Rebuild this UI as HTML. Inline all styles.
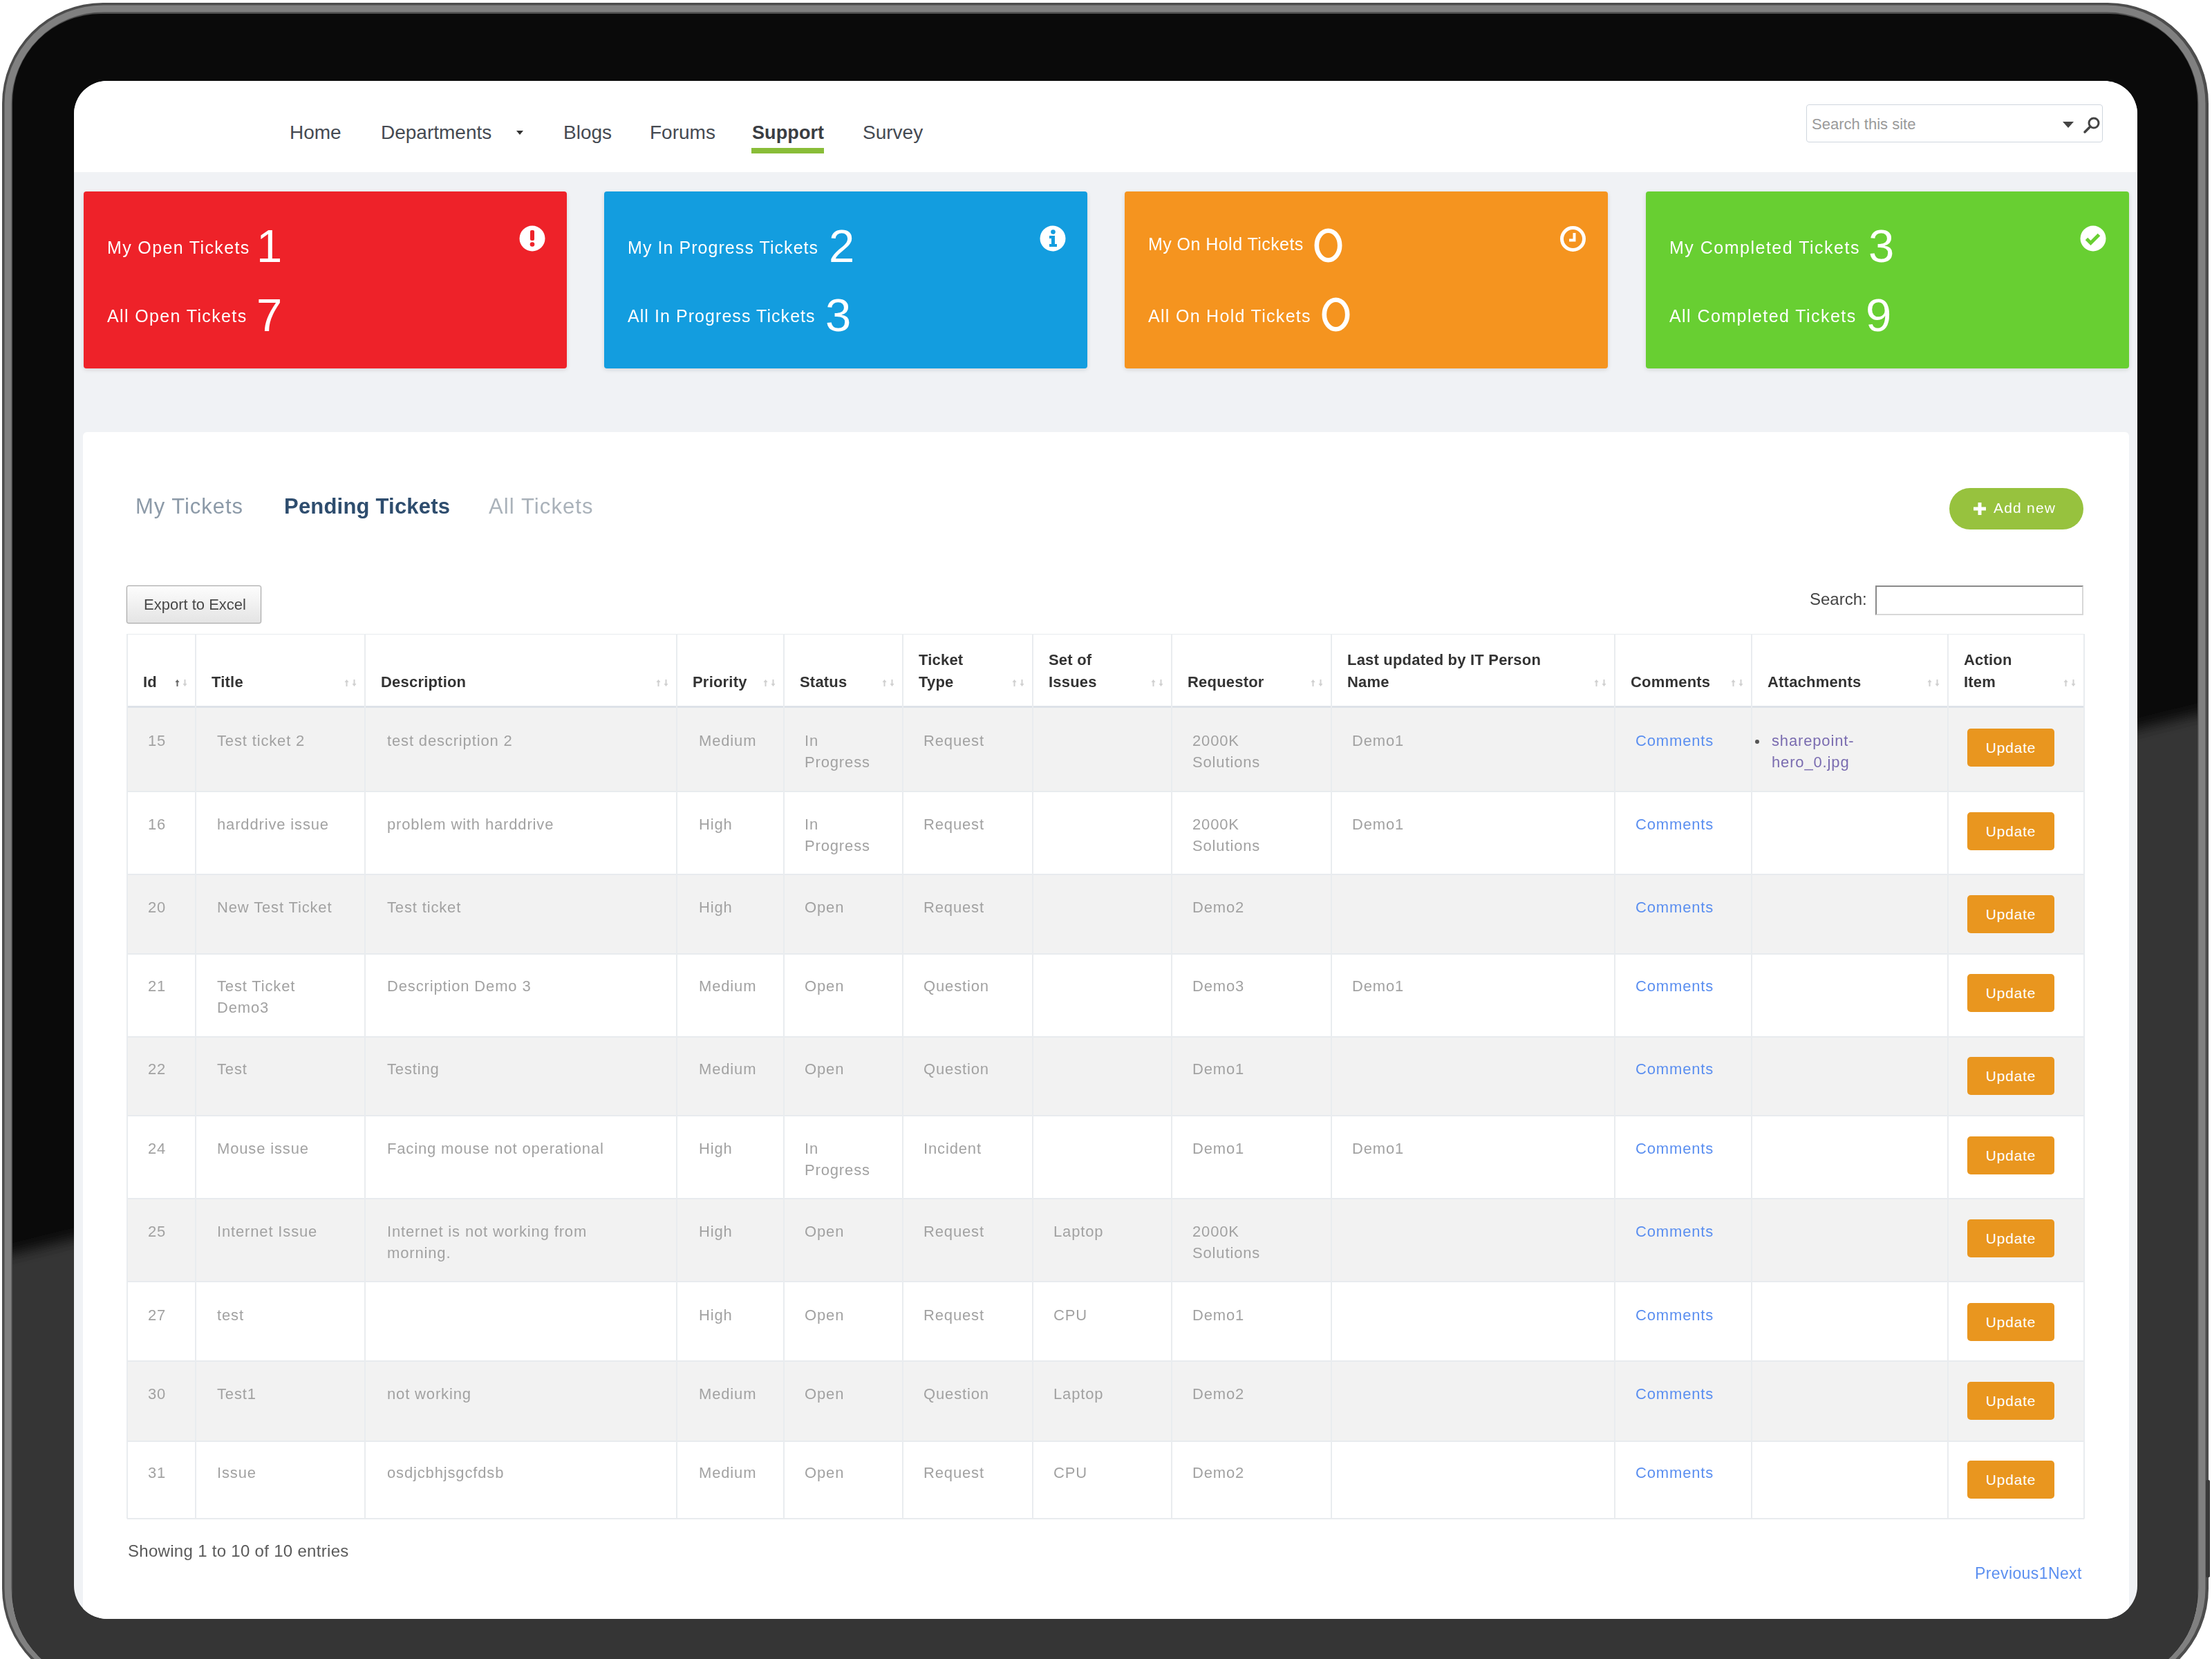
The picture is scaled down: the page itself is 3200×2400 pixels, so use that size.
<!DOCTYPE html>
<html><head><meta charset="utf-8">
<style>
html,body{margin:0;padding:0}
body{width:3200px;height:2400px;overflow:hidden;background:#fff;position:relative;font-family:"Liberation Sans",sans-serif}
.abs{position:absolute}
#frame{position:absolute;left:0;top:0}
#screen{position:absolute;left:0;top:0;width:3200px;height:2400px;clip-path:inset(117px 108px 58px 107px round 48px);background:#f0f2f5}
.nav{position:absolute;top:175px;font-size:28px;color:#454a52;line-height:34px;white-space:nowrap}
.card{position:absolute;top:277px;width:699px;height:256px;border-radius:4px;box-shadow:0 2px 6px rgba(0,0,0,0.12)}
.card .l{position:absolute;left:34px;font-size:25px;color:#fff;letter-spacing:1.5px;white-space:nowrap;line-height:30px}
.card .n{position:absolute;font-size:67px;color:#fff;line-height:70px;font-weight:400}
.card svg{position:absolute;left:629px;top:48px}

.hl{height:1px;background:#e8ebee}
.vl{width:2px;background:#e9ecef}
.th{position:absolute;font-size:22px;font-weight:700;color:#333;line-height:32px;white-space:nowrap;letter-spacing:0.2px}
.td{position:absolute;font-size:22px;color:#a2a2a2;line-height:31px;white-space:nowrap;letter-spacing:0.85px}
.lnk{color:#5b8ff0}
.att{color:#7a6cb0}
.upd{position:absolute;width:126px;height:55px;background:#e9961f;border-radius:5px;color:#fff;font-size:21px;line-height:55px;text-align:center;letter-spacing:0.8px}
.tab{position:absolute;top:713px;font-size:31px;line-height:40px;white-space:nowrap;letter-spacing:0.5px}
</style></head>
<body>
<div id="wrap" style="position:absolute;left:0;top:0;width:3200px;height:2400px;filter:blur(0.6px)">
<svg id="frame" width="3200" height="2400" viewBox="0 0 3200 2400">
  <defs>
    <clipPath id="inner"><rect x="18" y="20" width="3161" height="2413" rx="128" ry="128"/></clipPath>
    <filter id="blur"><feGaussianBlur stdDeviation="10"/></filter>
  </defs>
  <rect x="3" y="4" width="3192" height="2440" rx="146" ry="146" fill="#4d4d4d"/>
  <rect x="11.5" y="12.5" width="3174" height="2423" rx="138" ry="138" fill="none" stroke="#808080" stroke-width="10"/>
  <rect x="18" y="20" width="3161" height="2413" rx="128" ry="128" fill="#0a0a0a"/>
  <g clip-path="url(#inner)">
    <polygon points="-100,1843 3300,1003 3300,2500 -100,2500" fill="#353535" filter="url(#blur)"/>
  </g>
  <rect x="3191" y="2141" width="6" height="141" rx="2" fill="#3a3a3a"/>
</svg>

<div id="screen">
  <!-- header -->
  <div class="abs" style="left:0;top:0;width:3200px;height:249px;background:#fff"></div>
  <div class="nav" style="left:419px">Home</div>
  <div class="nav" style="left:551px">Departments</div>
  <div class="abs" style="left:747px;top:189px;width:0;height:0;border-left:5px solid transparent;border-right:5px solid transparent;border-top:6px solid #333"></div>
  <div class="nav" style="left:815px">Blogs</div>
  <div class="nav" style="left:940px">Forums</div>
  <div class="nav" style="left:1088px;font-weight:700;color:#3a3d42;font-size:27px;letter-spacing:0.1px">Support</div>
  <div class="abs" style="left:1087px;top:214px;width:105px;height:8px;background:#89bd38"></div>
  <div class="nav" style="left:1248px">Survey</div>

  <div class="abs" style="left:2613px;top:151px;width:427px;height:53px;border:1px solid #cfd6de;border-radius:4px;background:#fff"></div>
  <div class="abs" style="left:2621px;top:166px;font-size:22px;color:#9a9a9a;line-height:28px;white-space:nowrap">Search this site</div>
  <div class="abs" style="left:2984px;top:176px;width:0;height:0;border-left:8px solid transparent;border-right:8px solid transparent;border-top:9px solid #444"></div>
  <svg class="abs" style="left:3012px;top:167px" width="28" height="28" viewBox="0 0 28 28"><circle cx="17" cy="11" r="7" fill="none" stroke="#444" stroke-width="3"/><line x1="12" y1="16" x2="4" y2="24" stroke="#444" stroke-width="3.5" stroke-linecap="round"/></svg>

  <!-- cards -->
  <div class="card" style="left:121px;background:#ee2229">
    <div class="l" style="top:66px;letter-spacing:1.36px">My Open Tickets</div>
    <div class="n" style="left:250px;top:44px">1</div>
    <div class="l" style="top:165px;letter-spacing:1.37px">All Open Tickets</div>
    <div class="n" style="left:250px;top:144px">7</div>
    <svg width="40" height="40" viewBox="0 0 40 40"><circle cx="20" cy="20" r="18.5" fill="#fff"/><rect x="17" y="8" width="6" height="15" rx="2" fill="#ee2229"/><circle cx="20" cy="28.5" r="3.3" fill="#ee2229"/></svg>
  </div>
  <div class="card" style="left:874px;background:#139ddf">
    <div class="l" style="top:66px;letter-spacing:1.06px">My In Progress Tickets</div>
    <div class="n" style="left:325px;top:44px">2</div>
    <div class="l" style="top:165px;letter-spacing:1.06px">All In Progress Tickets</div>
    <div class="n" style="left:320px;top:144px">3</div>
    <svg width="40" height="40" viewBox="0 0 40 40"><circle cx="20" cy="20" r="18.5" fill="#fff"/><circle cx="20.5" cy="10.5" r="3.3" fill="#139ddf"/><path d="M15 16h8v12h3v4h-11v-4h3v-8h-3z" fill="#139ddf"/></svg>
  </div>
  <div class="card" style="left:1627px;background:#f5941f">
    <div class="l" style="top:61px;letter-spacing:0.45px">My On Hold Tickets</div>
    <div class="l" style="top:165px;letter-spacing:1.3px">All On Hold Tickets</div>
    <svg style="left:0;top:0" width="699" height="256"><ellipse cx="294.5" cy="78" rx="16.7" ry="21.3" fill="none" stroke="#fff" stroke-width="6.6"/><ellipse cx="305.5" cy="178" rx="16.7" ry="21.3" fill="none" stroke="#fff" stroke-width="6.6"/></svg>
    <svg width="40" height="40" viewBox="0 0 40 40"><circle cx="19.5" cy="20.5" r="16" fill="none" stroke="#fff" stroke-width="5"/><path d="M21.5 12V22.5H14" fill="none" stroke="#fff" stroke-width="4"/></svg>
  </div>
  <div class="card" style="left:2381px;background:#68cf32">
    <div class="l" style="top:66px;letter-spacing:1.5px">My Completed Tickets</div>
    <div class="n" style="left:322px;top:44px">3</div>
    <div class="l" style="top:165px;letter-spacing:1.44px">All Completed Tickets</div>
    <div class="n" style="left:318px;top:144px">9</div>
    <svg style="left:627px" width="40" height="40" viewBox="0 0 40 40"><circle cx="20" cy="20" r="18.5" fill="#fff"/><path d="M10.5 20.5l6 6 12-12" fill="none" stroke="#68cf32" stroke-width="5"/></svg>
  </div>

  <!-- main panel -->
  <div class="abs" style="left:120px;top:625px;width:2960px;height:1800px;background:#fff;border-radius:6px"></div>

  <div class="tab" style="left:196px;color:#8c9aa8;letter-spacing:0.95px">My Tickets</div>
  <div class="tab" style="left:411px;color:#2e4d6e;font-weight:700;letter-spacing:0.2px">Pending Tickets</div>
  <div class="tab" style="left:707px;color:#aab2ba;letter-spacing:1.1px">All Tickets</div>
  <div class="abs" style="left:2820px;top:706px;width:194px;height:60px;border-radius:30px;background:#97c23e"></div>
  <svg class="abs" style="left:2854px;top:726px" width="20" height="20" viewBox="0 0 20 20"><path d="M7.5 1h5v6.5H19v5h-6.5V19h-5v-6.5H1v-5h6.5z" fill="#fff"/></svg>
  <div class="abs" style="left:2884px;top:721px;font-size:21px;line-height:28px;color:#fff;white-space:nowrap;letter-spacing:1.2px">Add new</div>

  <div class="abs" style="left:183px;top:847px;width:193px;height:53px;border:1px solid #a5a5a5;box-shadow:0 0 1px #999;border-radius:3px;background:linear-gradient(#fdfdfd,#e4e4e4)"></div>
  <div class="abs" style="left:208px;top:861px;font-size:22px;line-height:28px;color:#484848;white-space:nowrap">Export to Excel</div>
  <div class="abs" style="left:2618px;top:852px;font-size:24px;line-height:30px;color:#444;white-space:nowrap">Search:</div>
  <div class="abs" style="left:2713px;top:847px;width:297px;height:39px;border:2px solid;border-color:#8a8a8a #d8d8d8 #d8d8d8 #8a8a8a;background:#fff"></div>
<div class="abs" style="left:184px;top:917px;width:2831px;height:106px;background:#fff"></div>
<div class="abs" style="left:184px;top:1023px;width:2831px;height:122px;background:#f2f2f2"></div>
<div class="abs" style="left:184px;top:1145px;width:2831px;height:120px;background:#fff"></div>
<div class="abs" style="left:184px;top:1265px;width:2831px;height:115px;background:#f2f2f2"></div>
<div class="abs" style="left:184px;top:1380px;width:2831px;height:120px;background:#fff"></div>
<div class="abs" style="left:184px;top:1500px;width:2831px;height:114px;background:#f2f2f2"></div>
<div class="abs" style="left:184px;top:1614px;width:2831px;height:120px;background:#fff"></div>
<div class="abs" style="left:184px;top:1734px;width:2831px;height:120px;background:#f2f2f2"></div>
<div class="abs" style="left:184px;top:1854px;width:2831px;height:115px;background:#fff"></div>
<div class="abs" style="left:184px;top:1969px;width:2831px;height:116px;background:#f2f2f2"></div>
<div class="abs" style="left:184px;top:2085px;width:2831px;height:112px;background:#fff"></div>
<div class="abs hl" style="left:184px;top:917px;width:2831px"></div>
<div class="abs" style="left:184px;top:1021px;width:2831px;height:3px;background:#dde2e8"></div>
<div class="abs hl" style="left:184px;top:1144px;width:2831px;height:2px"></div>
<div class="abs hl" style="left:184px;top:1264px;width:2831px;height:2px"></div>
<div class="abs hl" style="left:184px;top:1379px;width:2831px;height:2px"></div>
<div class="abs hl" style="left:184px;top:1499px;width:2831px;height:2px"></div>
<div class="abs hl" style="left:184px;top:1613px;width:2831px;height:2px"></div>
<div class="abs hl" style="left:184px;top:1733px;width:2831px;height:2px"></div>
<div class="abs hl" style="left:184px;top:1853px;width:2831px;height:2px"></div>
<div class="abs hl" style="left:184px;top:1968px;width:2831px;height:2px"></div>
<div class="abs hl" style="left:184px;top:2084px;width:2831px;height:2px"></div>
<div class="abs hl" style="left:184px;top:2196px;width:2831px;height:2px"></div>
<div class="abs vl" style="left:183px;top:917px;height:1280px"></div>
<div class="abs vl" style="left:282px;top:917px;height:1280px"></div>
<div class="abs vl" style="left:527px;top:917px;height:1280px"></div>
<div class="abs vl" style="left:978px;top:917px;height:1280px"></div>
<div class="abs vl" style="left:1133px;top:917px;height:1280px"></div>
<div class="abs vl" style="left:1305px;top:917px;height:1280px"></div>
<div class="abs vl" style="left:1493px;top:917px;height:1280px"></div>
<div class="abs vl" style="left:1694px;top:917px;height:1280px"></div>
<div class="abs vl" style="left:1925px;top:917px;height:1280px"></div>
<div class="abs vl" style="left:2335px;top:917px;height:1280px"></div>
<div class="abs vl" style="left:2533px;top:917px;height:1280px"></div>
<div class="abs vl" style="left:2817px;top:917px;height:1280px"></div>
<div class="abs vl" style="left:3014px;top:917px;height:1280px"></div>
<div class="th" style="left:207px;top:971px">Id</div>
<svg class="abs" style="left:253px;top:982px" width="20" height="12" viewBox="0 0 20 12"><path d="M3.5 1L0.5 5h2v6h2V5h2z" fill="#666"/><path d="M14.5 11L11.5 7h2V1h2v6h2z" fill="#d0d0d0"/></svg>
<div class="th" style="left:306px;top:971px">Title</div>
<svg class="abs" style="left:498px;top:982px" width="20" height="12" viewBox="0 0 20 12"><path d="M3.5 1L0.5 5h2v6h2V5h2z" fill="#d0d0d0"/><path d="M14.5 11L11.5 7h2V1h2v6h2z" fill="#d0d0d0"/></svg>
<div class="th" style="left:551px;top:971px">Description</div>
<svg class="abs" style="left:949px;top:982px" width="20" height="12" viewBox="0 0 20 12"><path d="M3.5 1L0.5 5h2v6h2V5h2z" fill="#d0d0d0"/><path d="M14.5 11L11.5 7h2V1h2v6h2z" fill="#d0d0d0"/></svg>
<div class="th" style="left:1002px;top:971px">Priority</div>
<svg class="abs" style="left:1104px;top:982px" width="20" height="12" viewBox="0 0 20 12"><path d="M3.5 1L0.5 5h2v6h2V5h2z" fill="#d0d0d0"/><path d="M14.5 11L11.5 7h2V1h2v6h2z" fill="#d0d0d0"/></svg>
<div class="th" style="left:1157px;top:971px">Status</div>
<svg class="abs" style="left:1276px;top:982px" width="20" height="12" viewBox="0 0 20 12"><path d="M3.5 1L0.5 5h2v6h2V5h2z" fill="#d0d0d0"/><path d="M14.5 11L11.5 7h2V1h2v6h2z" fill="#d0d0d0"/></svg>
<div class="th" style="left:1329px;top:939px">Ticket<br>Type</div>
<svg class="abs" style="left:1464px;top:982px" width="20" height="12" viewBox="0 0 20 12"><path d="M3.5 1L0.5 5h2v6h2V5h2z" fill="#d0d0d0"/><path d="M14.5 11L11.5 7h2V1h2v6h2z" fill="#d0d0d0"/></svg>
<div class="th" style="left:1517px;top:939px">Set of<br>Issues</div>
<svg class="abs" style="left:1665px;top:982px" width="20" height="12" viewBox="0 0 20 12"><path d="M3.5 1L0.5 5h2v6h2V5h2z" fill="#d0d0d0"/><path d="M14.5 11L11.5 7h2V1h2v6h2z" fill="#d0d0d0"/></svg>
<div class="th" style="left:1718px;top:971px">Requestor</div>
<svg class="abs" style="left:1896px;top:982px" width="20" height="12" viewBox="0 0 20 12"><path d="M3.5 1L0.5 5h2v6h2V5h2z" fill="#d0d0d0"/><path d="M14.5 11L11.5 7h2V1h2v6h2z" fill="#d0d0d0"/></svg>
<div class="th" style="left:1949px;top:939px">Last updated by IT Person<br>Name</div>
<svg class="abs" style="left:2306px;top:982px" width="20" height="12" viewBox="0 0 20 12"><path d="M3.5 1L0.5 5h2v6h2V5h2z" fill="#d0d0d0"/><path d="M14.5 11L11.5 7h2V1h2v6h2z" fill="#d0d0d0"/></svg>
<div class="th" style="left:2359px;top:971px">Comments</div>
<svg class="abs" style="left:2504px;top:982px" width="20" height="12" viewBox="0 0 20 12"><path d="M3.5 1L0.5 5h2v6h2V5h2z" fill="#d0d0d0"/><path d="M14.5 11L11.5 7h2V1h2v6h2z" fill="#d0d0d0"/></svg>
<div class="th" style="left:2557px;top:971px">Attachments</div>
<svg class="abs" style="left:2788px;top:982px" width="20" height="12" viewBox="0 0 20 12"><path d="M3.5 1L0.5 5h2v6h2V5h2z" fill="#d0d0d0"/><path d="M14.5 11L11.5 7h2V1h2v6h2z" fill="#d0d0d0"/></svg>
<div class="th" style="left:2841px;top:939px">Action<br>Item</div>
<svg class="abs" style="left:2985px;top:982px" width="20" height="12" viewBox="0 0 20 12"><path d="M3.5 1L0.5 5h2v6h2V5h2z" fill="#d0d0d0"/><path d="M14.5 11L11.5 7h2V1h2v6h2z" fill="#d0d0d0"/></svg>
<div class="td" style="left:214px;top:1056px">15</div>
<div class="td" style="left:314px;top:1056px">Test ticket 2</div>
<div class="td" style="left:560px;top:1056px">test description 2</div>
<div class="td" style="left:1011px;top:1056px">Medium</div>
<div class="td" style="left:1164px;top:1056px">In<br>Progress</div>
<div class="td" style="left:1336px;top:1056px">Request</div>
<div class="td" style="left:1725px;top:1056px">2000K<br>Solutions</div>
<div class="td" style="left:1956px;top:1056px">Demo1</div>
<div class="td lnk" style="left:2366px;top:1056px">Comments</div>
<div class="abs" style="left:2539px;top:1070px;width:6px;height:6px;border-radius:3px;background:#555"></div>
<div class="td att" style="left:2563px;top:1056px">sharepoint-<br>hero_0.jpg</div>
<div class="upd" style="left:2846px;top:1054px">Update</div>
<div class="td" style="left:214px;top:1177px">16</div>
<div class="td" style="left:314px;top:1177px">harddrive issue</div>
<div class="td" style="left:560px;top:1177px">problem with harddrive</div>
<div class="td" style="left:1011px;top:1177px">High</div>
<div class="td" style="left:1164px;top:1177px">In<br>Progress</div>
<div class="td" style="left:1336px;top:1177px">Request</div>
<div class="td" style="left:1725px;top:1177px">2000K<br>Solutions</div>
<div class="td" style="left:1956px;top:1177px">Demo1</div>
<div class="td lnk" style="left:2366px;top:1177px">Comments</div>
<div class="upd" style="left:2846px;top:1175px">Update</div>
<div class="td" style="left:214px;top:1297px">20</div>
<div class="td" style="left:314px;top:1297px">New Test Ticket</div>
<div class="td" style="left:560px;top:1297px">Test ticket</div>
<div class="td" style="left:1011px;top:1297px">High</div>
<div class="td" style="left:1164px;top:1297px">Open</div>
<div class="td" style="left:1336px;top:1297px">Request</div>
<div class="td" style="left:1725px;top:1297px">Demo2</div>
<div class="td lnk" style="left:2366px;top:1297px">Comments</div>
<div class="upd" style="left:2846px;top:1295px">Update</div>
<div class="td" style="left:214px;top:1411px">21</div>
<div class="td" style="left:314px;top:1411px">Test Ticket<br>Demo3</div>
<div class="td" style="left:560px;top:1411px">Description Demo 3</div>
<div class="td" style="left:1011px;top:1411px">Medium</div>
<div class="td" style="left:1164px;top:1411px">Open</div>
<div class="td" style="left:1336px;top:1411px">Question</div>
<div class="td" style="left:1725px;top:1411px">Demo3</div>
<div class="td" style="left:1956px;top:1411px">Demo1</div>
<div class="td lnk" style="left:2366px;top:1411px">Comments</div>
<div class="upd" style="left:2846px;top:1409px">Update</div>
<div class="td" style="left:214px;top:1531px">22</div>
<div class="td" style="left:314px;top:1531px">Test</div>
<div class="td" style="left:560px;top:1531px">Testing</div>
<div class="td" style="left:1011px;top:1531px">Medium</div>
<div class="td" style="left:1164px;top:1531px">Open</div>
<div class="td" style="left:1336px;top:1531px">Question</div>
<div class="td" style="left:1725px;top:1531px">Demo1</div>
<div class="td lnk" style="left:2366px;top:1531px">Comments</div>
<div class="upd" style="left:2846px;top:1529px">Update</div>
<div class="td" style="left:214px;top:1646px">24</div>
<div class="td" style="left:314px;top:1646px">Mouse issue</div>
<div class="td" style="left:560px;top:1646px">Facing mouse not operational</div>
<div class="td" style="left:1011px;top:1646px">High</div>
<div class="td" style="left:1164px;top:1646px">In<br>Progress</div>
<div class="td" style="left:1336px;top:1646px">Incident</div>
<div class="td" style="left:1725px;top:1646px">Demo1</div>
<div class="td" style="left:1956px;top:1646px">Demo1</div>
<div class="td lnk" style="left:2366px;top:1646px">Comments</div>
<div class="upd" style="left:2846px;top:1644px">Update</div>
<div class="td" style="left:214px;top:1766px">25</div>
<div class="td" style="left:314px;top:1766px">Internet Issue</div>
<div class="td" style="left:560px;top:1766px">Internet is not working from<br>morning.</div>
<div class="td" style="left:1011px;top:1766px">High</div>
<div class="td" style="left:1164px;top:1766px">Open</div>
<div class="td" style="left:1336px;top:1766px">Request</div>
<div class="td" style="left:1524px;top:1766px">Laptop</div>
<div class="td" style="left:1725px;top:1766px">2000K<br>Solutions</div>
<div class="td lnk" style="left:2366px;top:1766px">Comments</div>
<div class="upd" style="left:2846px;top:1764px">Update</div>
<div class="td" style="left:214px;top:1887px">27</div>
<div class="td" style="left:314px;top:1887px">test</div>
<div class="td" style="left:1011px;top:1887px">High</div>
<div class="td" style="left:1164px;top:1887px">Open</div>
<div class="td" style="left:1336px;top:1887px">Request</div>
<div class="td" style="left:1524px;top:1887px">CPU</div>
<div class="td" style="left:1725px;top:1887px">Demo1</div>
<div class="td lnk" style="left:2366px;top:1887px">Comments</div>
<div class="upd" style="left:2846px;top:1885px">Update</div>
<div class="td" style="left:214px;top:2001px">30</div>
<div class="td" style="left:314px;top:2001px">Test1</div>
<div class="td" style="left:560px;top:2001px">not working</div>
<div class="td" style="left:1011px;top:2001px">Medium</div>
<div class="td" style="left:1164px;top:2001px">Open</div>
<div class="td" style="left:1336px;top:2001px">Question</div>
<div class="td" style="left:1524px;top:2001px">Laptop</div>
<div class="td" style="left:1725px;top:2001px">Demo2</div>
<div class="td lnk" style="left:2366px;top:2001px">Comments</div>
<div class="upd" style="left:2846px;top:1999px">Update</div>
<div class="td" style="left:214px;top:2115px">31</div>
<div class="td" style="left:314px;top:2115px">Issue</div>
<div class="td" style="left:560px;top:2115px">osdjcbhjsgcfdsb</div>
<div class="td" style="left:1011px;top:2115px">Medium</div>
<div class="td" style="left:1164px;top:2115px">Open</div>
<div class="td" style="left:1336px;top:2115px">Request</div>
<div class="td" style="left:1524px;top:2115px">CPU</div>
<div class="td" style="left:1725px;top:2115px">Demo2</div>
<div class="td lnk" style="left:2366px;top:2115px">Comments</div>
<div class="upd" style="left:2846px;top:2113px">Update</div>

  <div class="abs" style="left:185px;top:2228px;font-size:24px;line-height:32px;color:#5a5a5a;white-space:nowrap;letter-spacing:0.3px">Showing 1 to 10 of 10 entries</div>
  <div class="abs" style="left:2857px;top:2261px;font-size:23px;line-height:30px;color:#5b8ff0;white-space:nowrap;letter-spacing:0.4px">Previous1Next</div>
</div>
</div>
</body></html>
